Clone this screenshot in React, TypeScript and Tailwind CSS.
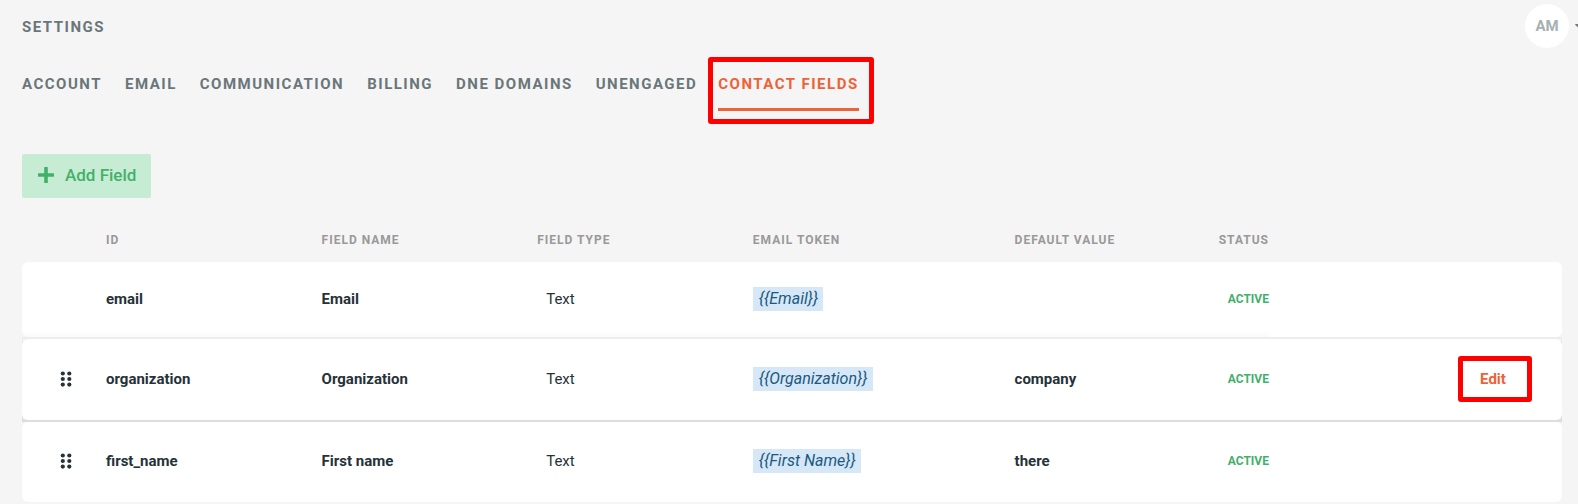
import { clsx } from 'clsx';

const tabs = [
  "Account",
  "Email",
  "Communication",
  "Billing",
  "DNE Domains",
  "Unengaged",
  "Contact Fields"
];

const fields = [
  { id: "email", name: "Email", type: "Text", token: "{{Email}}", defaultValue: "", locked: true, editing: false },
  { id: "organization", name: "Organization", type: "Text", token: "{{Organization}}", defaultValue: "company", locked: false, editing: true },
  { id: "first_name", name: "First name", type: "Text", token: "{{First Name}}", defaultValue: "there", locked: false, editing: false }
];

function PlusIcon() {
  return (
    <svg className="w-4 h-4" viewBox="0 0 16 16" fill="currentColor" aria-hidden="true">
      <path d="M6.2 0.5Q6.2 0 6.7 0h2.6Q9.8 0 9.8 0.5V6.3h5.7Q16 6.3 16 6.8v2.4Q16 9.7 15.5 9.7H9.8v5.8Q9.8 16 9.3 16H6.7Q6.2 16 6.2 15.5V9.7H0.5Q0 9.7 0 9.2V6.8Q0 6.3 0.5 6.3h5.7z" />
    </svg>
  );
}

function DragIcon() {
  return (
    <svg className="w-3 h-4" viewBox="0 0 12 16" fill="currentColor" aria-hidden="true">
      <circle cx="2.8" cy="2.5" r="2.1" />
      <circle cx="9.3" cy="2.5" r="2.1" />
      <circle cx="2.8" cy="8" r="2.1" />
      <circle cx="9.3" cy="8" r="2.1" />
      <circle cx="2.8" cy="13.6" r="2.1" />
      <circle cx="9.3" cy="13.6" r="2.1" />
    </svg>
  );
}

export default function App() {
  return (
    <div className="min-h-screen overflow-hidden bg-[#f5f5f5] font-['Roboto',sans-serif] text-[15px] leading-5 text-[#263238]">
      {/* Header */}
      <header className="flex items-center justify-between pt-1 pl-[22px]">
        <h1 className="pt-0.5 font-bold uppercase tracking-widest text-[#6a7679]">Settings</h1>
        <button type="button" aria-label="Account menu" className="flex items-center gap-1.5 -mr-[7px]">
          <span className="flex items-center justify-center w-11 h-11 rounded-full bg-white font-bold text-[#a5b0b3]">AM</span>
          <svg className="w-2.5 h-[5px]" viewBox="0 0 10 5" fill="#777777" aria-hidden="true">
            <path d="M0.6 0h8.8Q10.3 0.2 9.6 1L5.6 4.8Q5 5.2 4.4 4.8L0.4 1Q-0.3 0.2 0.6 0z" />
          </svg>
        </button>
      </header>

      {/* Tabs */}
      <nav className="flex items-start gap-[23px] mt-[9px] pl-[22px]">
        {tabs.map((tab) => {
          const active = tab === "Contact Fields";
          return (
            <div key={tab} className={clsx("shrink-0", active ? "-ml-3 border-5 border-[#ff0000] rounded-[3px] pl-[5px] pr-[10px] pt-3 pb-2" : "pt-[17px]")}>
              <a
                href="#"
                aria-current={active ? "page" : undefined}
                className={clsx(
                  "block font-bold uppercase tracking-widest",
                  active ? "pb-[14px] border-b-3 border-[#ee6237] text-[#ee6237]" : "text-[#6a7679]"
                )}
              >
                {tab}
              </a>
            </div>
          );
        })}
      </nav>

      <main className="pl-[22px] pr-4 pt-[30px]">
        <button type="button" className="flex items-center h-11 gap-[11px] pl-4 pr-[15px] pb-0.5 rounded-[2px] bg-[#c6ecd3] text-[17px] font-medium text-[#43b06a]">
          <PlusIcon />
          Add Field
        </button>

        {/* Contact fields */}
        <table className="w-full mt-6 table-fixed border-separate border-spacing-x-0 border-spacing-y-0.5">
          <colgroup>
            <col className="w-[84px]" />
            <col className="w-[14%]" />
            <col className="w-[14%]" />
            <col className="w-[14%]" />
            <col className="w-[17%]" />
            <col className="w-[11%]" />
            <col className="w-[85px]" />
            <col />
          </colgroup>
          <thead>
            <tr className="h-[36px] text-left text-xs uppercase tracking-[1px] text-[#999999] [&>th]:pb-1 [&>th]:font-bold">
              <td></td>
              <th scope="col">ID</th>
              <th scope="col">Field name</th>
              <th scope="col">Field type</th>
              <th scope="col">Email token</th>
              <th scope="col">Default value</th>
              <th scope="col" className="text-right">Status</th>
              <td></td>
            </tr>
          </thead>
          <tbody>
            {fields.map((field) => (
              <tr
                key={field.id}
                className={clsx(
                  "[&>td]:bg-white [&>td]:pb-0.5 [&>td:first-child]:rounded-l-md [&>td:last-child]:rounded-r-md",
                  field.locked && "h-[75px] shadow-[0_2px_0_#ededed] [&>td:not(:last-child)]:bg-linear-to-t [&>td:not(:last-child)]:from-[#fafafa] [&>td:not(:last-child)]:to-white [&>td:not(:last-child)]:to-[6px]",
                  !field.locked && !field.editing && "h-20",
                  field.editing && "h-[81px] bg-[#e4e4e4] shadow-[0_2px_0_#dddddd]"
                )}
              >
                <td className="pl-[38px]">
                  {!field.locked && (
                    <button type="button" aria-label={`Reorder ${field.name}`} className="block cursor-grab">
                      <DragIcon />
                    </button>
                  )}
                </td>
                <td className="font-bold">{field.id}</td>
                <td className="font-bold">{field.name}</td>
                <td className="pl-[9px]">{field.type}</td>
                <td>
                  <em className="inline-block pl-1.5 pr-[5px] py-0.5 bg-[#d6e7f7] text-base leading-5 text-[#1b5a80]">{field.token}</em>
                </td>
                <td className="font-bold">{field.defaultValue}</td>
                <td className="text-right text-xs font-bold text-[#43b06a]">ACTIVE</td>
                <td className="pr-[30px]">
                  {field.editing && (
                    <button type="button" className="block ml-auto w-[74px] h-[46px] pr-1 border-5 border-[#ff0000] rounded-[3px] font-bold text-[#ee6237]">
                      Edit
                    </button>
                  )}
                </td>
              </tr>
            ))}
          </tbody>
        </table>
      </main>
    </div>
  );
}
